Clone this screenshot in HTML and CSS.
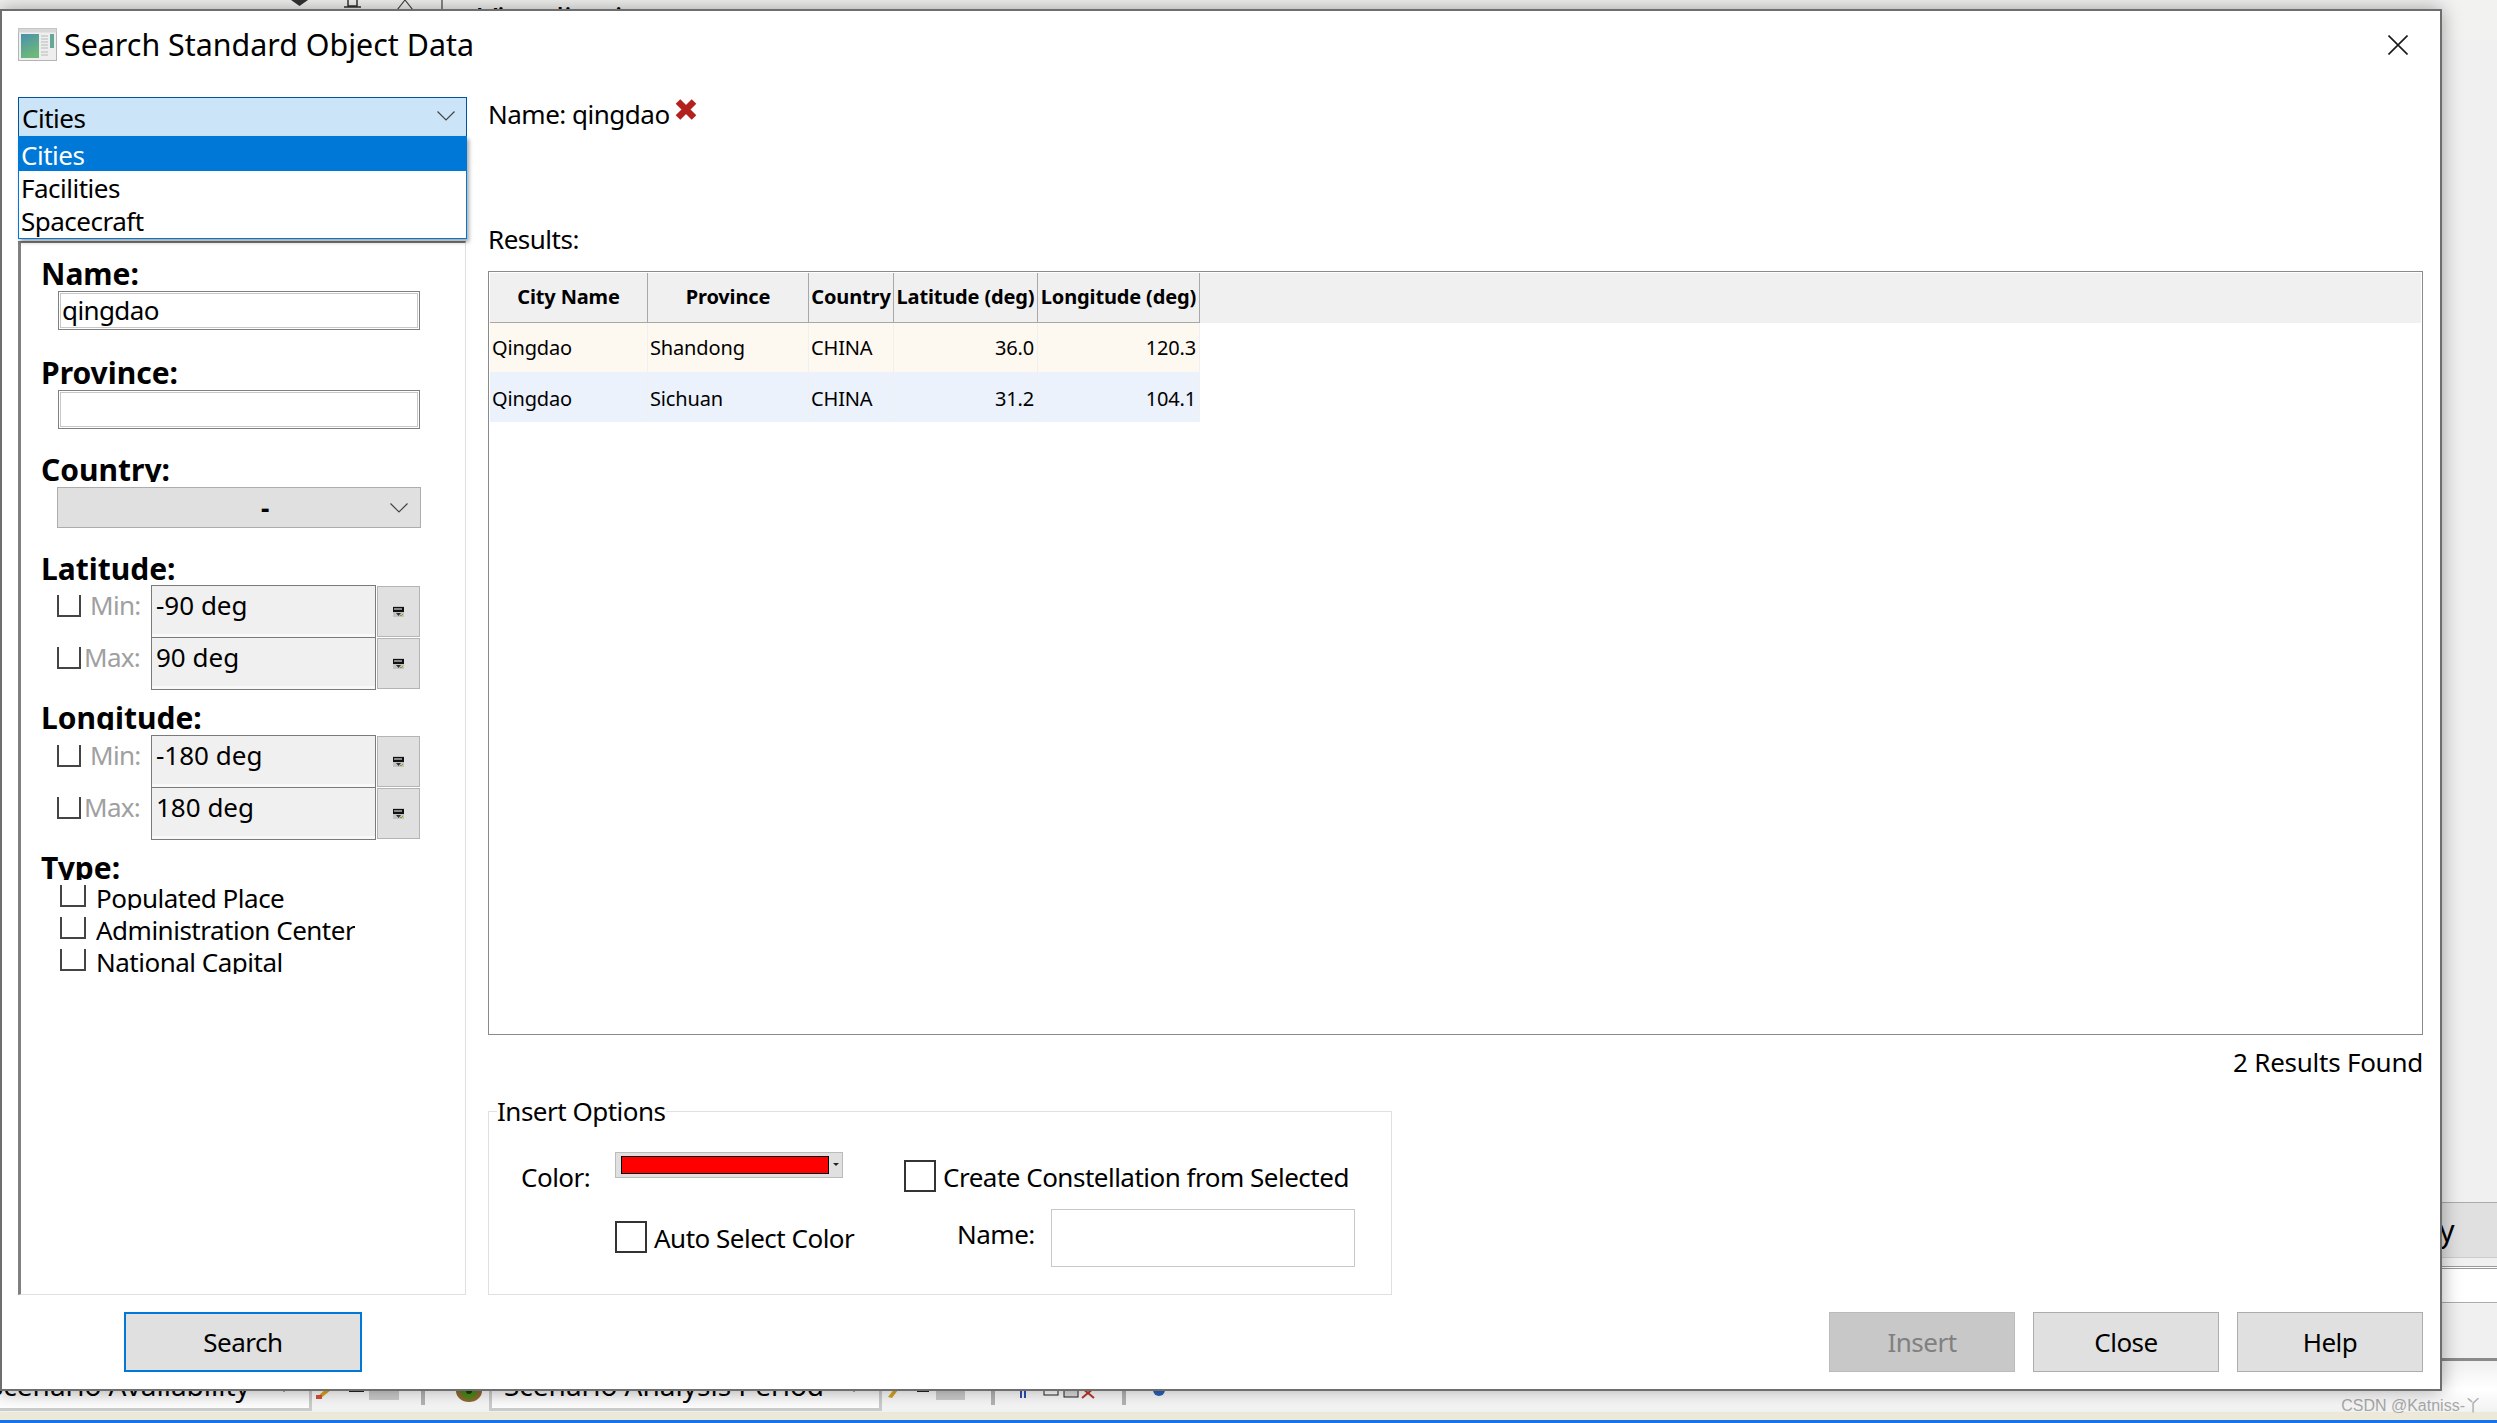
FILE: index.html
```html
<!DOCTYPE html>
<html lang="en">
<head>
    <meta charset="UTF-8">
    <meta name="viewport" content="width=device-width, initial-scale=1.0">
    <title>Search Standard Object Data</title>
    <link rel="stylesheet" href="styles.css">
</head>
<body>
    <svg class="defs" width="0" height="0">
        <symbol id="chevron" viewBox="0 0 18 10">
            <polyline points="0.5,0.5 9,9 17.5,0.5" fill="none" stroke="#444" stroke-width="1.2"/>
        </symbol>
        <symbol id="ruler" viewBox="0 0 11 11">
            <rect width="11" height="11" fill="#c4c4c4"/>
            <rect x="0" y="1" width="11" height="5" fill="#111"/>
            <path d="M2 2v2M4 2v2M6 2v2M8 2v2" stroke="#fff" stroke-width="1"/>
            <polygon points="3,7 8,7 5.5,10" fill="#333"/>
            <path d="M7 9l1 1 2-2" stroke="#9a9a20" stroke-width="1" fill="none"/>
        </symbol>
    </svg>

    <!-- application behind the dialog -->
    <div class="app">
        <div class="app-top">
            <svg class="top-icons" width="130" height="10" viewBox="0 0 130 10">
                <polygon points="0,0 17,0 8.5,6" fill="#333"/>
                <path d="M57 0v6h9v-6M53 7h17" fill="none" stroke="#333" stroke-width="1.5"/>
                <path d="M106 10l8-10 8 10" fill="none" stroke="#444" stroke-width="1.2"/>
            </svg>
            <div class="top-divider"></div>
            <div class="top-tab">Visualization</div>
        </div>
        <div class="app-main">
            <div class="side">
                <div class="side-btn">Apply</div>
                <div class="side-field"></div>
            </div>
        </div>
        <div class="app-toolbar">
            <div class="tool-combo tool-combo-first"><span>Scenario Availability</span><i class="tool-arrow"></i></div>
            <svg class="tool-icons" width="86" height="16" viewBox="0 0 86 16">
                <path d="M2 9l10-9 4 2-10 8z" fill="#d9a520"/>
                <rect x="1" y="7" width="6" height="4" fill="#d8503c"/>
                <rect x="34" y="0" width="15" height="4" fill="#222"/>
                <rect x="54" y="0" width="30" height="12" fill="#ccc"/>
            </svg>
            <div class="tool-sep"></div>
            <svg class="tool-eye" width="28" height="16" viewBox="0 0 28 16">
                <ellipse cx="14" cy="3" rx="13" ry="11" fill="#8c6a30"/>
                <ellipse cx="14" cy="3" rx="8" ry="8" fill="#4c8a18"/>
                <circle cx="14" cy="3" r="3" fill="#1c3a0c"/>
            </svg>
            <div class="tool-combo tool-combo-second"><span>Scenario Analysis Period</span><i class="tool-arrow"></i></div>
            <svg class="tool-icons tool-icons-second" width="78" height="16" viewBox="0 0 78 16">
                <path d="M0 9l7-9 3 2-6 8z" fill="#d9a520"/>
                <rect x="29" y="0" width="12" height="4" fill="#222"/>
                <rect x="48" y="0" width="29" height="12" fill="#ccc"/>
            </svg>
            <div class="tool-sep tool-sep-second"></div>
            <svg class="tool-icons tool-icons-third" width="78" height="12" viewBox="0 0 78 12">
                <path d="M1 2v8M5 2v8" stroke="#2a4fb0" stroke-width="2"/>
                <rect x="24" y="0" width="14" height="7" fill="#fff" stroke="#222"/>
                <rect x="44" y="0" width="14" height="9" fill="#ddd" stroke="#222"/>
                <path d="M62 0l12 10M74 0l-12 10" stroke="#c0342a" stroke-width="2"/>
            </svg>
            <div class="tool-sep tool-sep-third"></div>
            <svg class="tool-icons tool-icons-fourth" width="16" height="10" viewBox="0 0 16 10">
                <circle cx="8" cy="2" r="6" fill="#2a64b8"/>
            </svg>
        </div>
        <div class="app-status"></div>
        <div class="app-taskbar"></div>
    </div>

    <div class="watermark">CSDN @Katniss-丫</div>

    <div class="dialog">
        <div class="titlebar">
            <svg class="title-icon" width="39" height="33" viewBox="0 0 39 33">
                <defs>
                    <linearGradient id="pane" x1="0" y1="0" x2="0.4" y2="1">
                        <stop offset="0" stop-color="#4a90ae"/>
                        <stop offset="1" stop-color="#6db87a"/>
                    </linearGradient>
                </defs>
                <rect x="0.5" y="0.5" width="38" height="32" fill="#eeeeee" stroke="#b4b4b4"/>
                <rect x="0.5" y="0.5" width="38" height="4" fill="#d8d8d8"/>
                <rect x="3" y="6" width="18" height="24" fill="url(#pane)"/>
                <path d="M23 8h7M23 11h7M23 14h7M23 17h7M23 20h7M23 24h7M23 27h7" stroke="#b8b8b8"/>
                <rect x="32" y="6" width="4" height="14" fill="#64a89a"/>
            </svg>
            <div class="title-text">Search Standard Object Data</div>
            <svg class="close-x" width="20" height="20" viewBox="0 0 20 20">
                <path d="M0.5 0.5L19.5 19.5M19.5 0.5L0.5 19.5" stroke="#1a1a1a" stroke-width="1.6"/>
            </svg>
        </div>

        <div class="dialog-body">
            <div class="sidebar">
                <div class="type-combo">
                    <div class="type-value">Cities</div>
                    <svg class="type-chevron" width="18" height="10"><use href="#chevron"/></svg>
                    <div class="type-list">
                        <div class="type-item selected">Cities</div>
                        <div class="type-item">Facilities</div>
                        <div class="type-item">Spacecraft</div>
                    </div>
                </div>

                <div class="panel">
                    <div class="group group-name">
                        <div class="field-label tight">Name:</div>
                        <input class="text-input" type="text" value="qingdao">
                    </div>
                    <div class="group group-province">
                        <div class="field-label tight">Province:</div>
                        <input class="text-input" type="text" value="">
                    </div>
                    <div class="group group-country">
                        <div class="field-label">Country:</div>
                        <div class="country-select">
                            <span class="country-value">-</span>
                            <svg width="18" height="10"><use href="#chevron"/></svg>
                        </div>
                    </div>
                    <div class="group group-latitude">
                        <div class="field-label">Latitude:</div>
                        <div class="range-row">
                            <div class="range-left"><i class="open-check"></i><span class="range-label">Min:</span></div>
                            <div class="range-field">-90 deg</div>
                            <div class="range-btn"><svg width="11" height="11"><use href="#ruler"/></svg></div>
                        </div>
                        <div class="range-row">
                            <div class="range-left"><i class="open-check"></i><span class="range-label max">Max:</span></div>
                            <div class="range-field">90 deg</div>
                            <div class="range-btn"><svg width="11" height="11"><use href="#ruler"/></svg></div>
                        </div>
                    </div>
                    <div class="group group-longitude">
                        <div class="field-label">Longitude:</div>
                        <div class="range-row">
                            <div class="range-left"><i class="open-check"></i><span class="range-label">Min:</span></div>
                            <div class="range-field">-180 deg</div>
                            <div class="range-btn"><svg width="11" height="11"><use href="#ruler"/></svg></div>
                        </div>
                        <div class="range-row">
                            <div class="range-left"><i class="open-check"></i><span class="range-label max">Max:</span></div>
                            <div class="range-field">180 deg</div>
                            <div class="range-btn"><svg width="11" height="11"><use href="#ruler"/></svg></div>
                        </div>
                    </div>
                    <div class="group group-type">
                        <div class="field-label">Type:</div>
                        <div class="type-check"><i class="open-check wide"></i><span>Populated Place</span></div>
                        <div class="type-check"><i class="open-check wide"></i><span>Administration Center</span></div>
                        <div class="type-check"><i class="open-check wide"></i><span>National Capital</span></div>
                    </div>
                </div>
            </div>

            <div class="results">
                <div class="query-line">
                    <span>Name: qingdao</span>
                    <svg class="query-clear" width="24" height="23" viewBox="0 0 24 23">
                        <path d="M4 3.5L20 19.5M20 3.5L4 19.5" stroke="#b3211d" stroke-width="6.5"/>
                    </svg>
                </div>
                <div class="results-label">Results:</div>
                <div class="table-frame">
                    <table class="result-table">
                        <colgroup>
                            <col class="col-city">
                            <col class="col-province">
                            <col class="col-country">
                            <col class="col-lat">
                            <col class="col-lon">
                            <col>
                        </colgroup>
                        <thead>
                            <tr>
                                <th>City Name</th>
                                <th>Province</th>
                                <th>Country</th>
                                <th>Latitude (deg)</th>
                                <th>Longitude (deg)</th>
                                <th class="filler"></th>
                            </tr>
                        </thead>
                        <tbody>
                            <tr class="row-odd">
                                <td>Qingdao</td>
                                <td>Shandong</td>
                                <td>CHINA</td>
                                <td class="num">36.0</td>
                                <td class="num">120.3</td>
                                <td class="filler"></td>
                            </tr>
                            <tr class="row-even">
                                <td>Qingdao</td>
                                <td>Sichuan</td>
                                <td>CHINA</td>
                                <td class="num">31.2</td>
                                <td class="num">104.1</td>
                                <td class="filler"></td>
                            </tr>
                        </tbody>
                    </table>
                </div>
                <div class="results-count">2 Results Found</div>

                <fieldset class="insert-options">
                    <legend>Insert Options</legend>
                    <div class="options-grid">
                        <div class="opt-label">Color:</div>
                        <div class="color-btn">
                            <div class="color-swatch"></div>
                            <i class="color-arrow"></i>
                        </div>
                        <label class="opt-check create"><i class="box"></i><span>Create Constellation from Selected</span></label>
                        <div></div>
                        <label class="opt-check auto"><i class="box"></i><span>Auto Select Color</span></label>
                        <div class="opt-name">
                            <span>Name:</span>
                            <div class="opt-input"></div>
                        </div>
                    </div>
                </fieldset>
            </div>
        </div>

        <div class="footer">
            <button class="btn btn-default">Search</button>
            <div class="footer-right">
                <button class="btn btn-disabled">Insert</button>
                <button class="btn">Close</button>
                <button class="btn">Help</button>
            </div>
        </div>
    </div>
</body>
</html>
```

FILE: styles.css
```css
* {
    box-sizing: border-box;
}
html, body {
    margin: 0;
    height: 100%;
}
body {
    position: relative;
    width: 2497px;
    height: 1423px;
    overflow: hidden;
    font-family: "Noto Sans", sans-serif;
    font-size: 26px;
    letter-spacing: -0.5px;
    color: #000;
    background-color: #f0f0f0;
}
.defs {
    position: absolute;
}

/* app behind the dialog */
.app {
    display: flex;
    flex-direction: column;
    height: 1423px;
}
.app-top {
    display: flex;
    height: 40px;
    padding-left: 291px;
    background-color: #f2f2f0;
}
.top-icons {
    display: block;
}
.top-divider {
    width: 2px;
    height: 10px;
    margin-left: 20px;
    background-color: #888;
}
.top-tab {
    margin-left: 35px;
    font-size: 32px;
    line-height: 40px;
}
.app-main {
    display: flex;
    flex: 1;
    justify-content: flex-end;
    padding-top: 1162px;
    background-color: #f0f0f0;
}
.side {
    width: 200px;
}
.side-btn {
    height: 56px;
    padding-right: 43px;
    border-top: 1px solid #aaa;
    border-bottom: 1px solid #ccc;
    background-color: #e0e0e0;
    font-size: 30px;
    line-height: 56px;
    text-align: right;
}
.side-field {
    height: 37px;
    margin-top: 8px;
    border-top: 3px double #999;
    border-bottom: 1px solid #aaa;
    background-color: #fff;
    box-shadow: 0 1px 0 #f4f3ec;
}
.app-toolbar {
    display: flex;
    align-items: flex-start;
    height: 54px;
    border-top: 3px solid #8a8a8a;
    background: linear-gradient(#f0f0f0, #fff 55%, #f2f2f2);
}
.tool-combo {
    display: flex;
    align-items: center;
    height: 50px;
    border-right: 3px solid #ccc;
    border-bottom: 3px solid #ccc;
    background: linear-gradient(#eee, #fff);
    font-size: 28px;
    letter-spacing: 0;
    line-height: 44px;
    white-space: nowrap;
}
.tool-combo span {
    flex: 1;
}
.tool-combo-first {
    width: 324px;
    margin-left: -12px;
    padding-right: 21px;
}
.tool-combo-second {
    width: 393px;
    margin-left: 6px;
    padding-left: 12px;
    padding-right: 21px;
    border-left: 3px solid #ccc;
}
.tool-arrow {
    width: 0;
    height: 0;
    margin-top: 10px;
    border-top: 5px solid #333;
    border-left: 4px solid transparent;
    border-right: 4px solid transparent;
}
.tool-icons {
    margin-top: 27px;
    margin-left: 3px;
}
.tool-sep {
    width: 4px;
    height: 44px;
    margin-left: 20px;
    background-color: #b4b4b4;
}
.tool-eye {
    margin-top: 27px;
    margin-left: 30px;
}
.tool-icons-second {
    margin-left: 6px;
}
.tool-sep-second {
    margin-left: 25px;
}
.tool-icons-third {
    margin-left: 25px;
}
.tool-sep-third {
    margin-left: 24px;
}
.tool-icons-fourth {
    margin-left: 25px;
}
.app-status {
    height: 8px;
    background-color: #ece9d8;
}
.app-taskbar {
    height: 3px;
    background-color: #1873e8;
}
.watermark {
    position: absolute;
    top: 1396px;
    right: 16px;
    color: #a8a8a8;
    font-family: "Liberation Sans", "Noto Sans CJK SC", sans-serif;
    font-size: 16px;
    letter-spacing: 0;
    line-height: 20px;
}

/* dialog */
.dialog {
    position: absolute;
    top: 9px;
    left: 0;
    display: flex;
    flex-direction: column;
    width: 2442px;
    height: 1382px;
    border: 2px solid #6e6e6e;
    background-color: #fff;
    box-shadow: 0 0 18px rgba(0,0,0,0.35);
}
.titlebar {
    display: flex;
    align-items: center;
    height: 67px;
    padding-left: 16px;
    padding-right: 32px;
}
.title-icon {
    flex: none;
}
.title-text {
    flex: 1;
    margin-left: 7px;
    font-size: 30.4px;
    letter-spacing: 0;
    line-height: 40px;
}
.close-x {
    flex: none;
}
.dialog-body {
    display: grid;
    grid-template-columns: 449px 1935px;
    column-gap: 21px;
    height: 1234px;
    padding: 19px 0 0 16px;
}

/* left column */
.sidebar {
    min-width: 0;
}
.type-combo {
    position: relative;
    display: flex;
    align-items: center;
    height: 40px;
    border: 1px solid #005499;
    background-color: #cce4f7;
}
.type-value {
    flex: 1;
    padding-left: 3px;
    padding-top: 1px;
    line-height: 36px;
}
.type-chevron {
    margin-right: 11px;
    margin-top: -3px;
}
.type-list {
    position: absolute;
    top: 38px;
    left: -1px;
    right: -1px;
    z-index: 1;
    height: 103px;
    border: 1px solid #0078d7;
    border-top: none;
    background-color: #fff;
    box-shadow: 2px 3px 4px rgba(0,0,0,0.35);
}
.type-item {
    height: 33px;
    padding-left: 2px;
    line-height: 35px;
}
.type-item.selected {
    height: 35px;
    padding-top: 2px;
    background-color: #0078d7;
    color: #fff;
}
.panel {
    width: 448px;
    height: 1054px;
    margin-top: 104px;
    padding-top: 18px;
    border-top: 2px solid #7a7a7a;
    border-left: 3px solid #808080;
    border-right: 1px solid #e0e0e0;
    border-bottom: 1px solid #e0e0e0;
}
.group-province {
    margin-top: 30px;
}
.group-country {
    margin-top: 27px;
}
.group-latitude {
    margin-top: 27px;
}
.group-longitude {
    margin-top: 15px;
}
.group-type {
    margin-top: 15px;
}
.field-label {
    height: 26px;
    margin-bottom: 5px;
    padding-left: 20px;
    overflow: hidden;
    font-size: 30px;
    font-weight: bold;
    letter-spacing: 0;
    line-height: 28px;
}
.field-label.tight {
    height: 25px;
    line-height: 26px;
}
.group-latitude .field-label {
    margin-bottom: 4px;
}
.text-input {
    display: block;
    width: 362px;
    height: 39px;
    margin: 0 0 0 37px;
    padding: 0 0 2px 3px;
    border: 1px solid #808080;
    outline: none;
    box-shadow: inset 0 0 0 1px #fff, inset 0 0 0 2px #c8c8c8;
    background-color: #fff;
    font-family: inherit;
    font-size: 26px;
    letter-spacing: -0.6px;
    color: #000;
}
.country-select {
    display: flex;
    align-items: center;
    width: 364px;
    height: 41px;
    margin-left: 36px;
    padding-right: 12px;
    border: 1px solid #adadad;
    background-color: #e0e0e0;
}
.country-value {
    flex: 1;
    padding-left: 82px;
    font-weight: bold;
    text-align: center;
    line-height: 38px;
}
.range-row {
    display: flex;
    height: 52px;
    margin-left: 36px;
}
.range-left {
    display: flex;
    width: 94px;
    padding-top: 10px;
}
.open-check {
    display: block;
    flex: none;
    width: 24px;
    height: 22px;
    border: 2px solid #444;
    border-top: none;
}
.open-check.wide {
    width: 26px;
}
.range-label {
    margin-left: 9px;
    margin-top: -8px;
    color: #a0a0a0;
    font-size: 26px;
    letter-spacing: -0.7px;
    line-height: 36px;
}
.range-label.max {
    margin-left: 3px;
}
.range-field {
    width: 225px;
    height: 53px;
    padding: 1px 0 0 4px;
    border: 1px solid #7a7a7a;
    background-color: #f0f0f0;
    box-shadow: inset 0 -3px 0 #f8f8f8;
    font-size: 26px;
    letter-spacing: 0;
    line-height: 36px;
}
.range-btn {
    display: flex;
    justify-content: center;
    align-items: center;
    width: 43px;
    height: 51px;
    margin-top: 1px;
    margin-left: 1px;
    border: 1px solid #b4b4b4;
    background-color: #e0e0e0;
}
.type-check {
    display: flex;
    height: 32px;
    margin-left: 39px;
    font-size: 26px;
}
.type-check span {
    height: 25px;
    margin-left: 10px;
    overflow: hidden;
    line-height: 26px;
}

/* right column */
.results {
    min-width: 0;
}
.query-line {
    display: flex;
    height: 34px;
    line-height: 34px;
}
.query-clear {
    margin-top: 1px;
    margin-left: 4px;
}
.results-label {
    height: 34px;
    margin-top: 91px;
    line-height: 34px;
}
.table-frame {
    height: 764px;
    margin-top: 15px;
    padding: 1px;
    border: 1px solid #8a8a8a;
}
.result-table {
    width: 100%;
    border-collapse: separate;
    border-spacing: 0;
    table-layout: fixed;
    font-size: 20px;
    letter-spacing: -0.15px;
}
.col-city {
    width: 158px;
}
.col-province {
    width: 161px;
}
.col-country {
    width: 85px;
}
.col-lat {
    width: 144px;
}
.col-lon {
    width: 162px;
}
.result-table th {
    height: 50px;
    padding: 0 0 2px;
    border-right: 1px solid #a8a8a8;
    border-bottom: 1px solid #a8a8a8;
    background-color: #f0f0f0;
    font-weight: bold;
    white-space: nowrap;
}
.result-table th.filler {
    border: none;
}
.result-table td {
    height: 49px;
    padding: 0 2px;
    border-right: 1px solid #f0f0f0;
}
.result-table td.filler {
    border: none;
    background-color: transparent;
}
.result-table td.num {
    padding-right: 3px;
    text-align: right;
}
.row-odd td {
    background-color: #fdf9f0;
}
.row-even td {
    height: 50px;
    padding-top: 2px;
    background-color: #ebf2fc;
}
.results-count {
    height: 34px;
    margin-top: 10px;
    letter-spacing: -0.25px;
    line-height: 34px;
    text-align: right;
}
.insert-options {
    width: 904px;
    height: 201px;
    margin: 15px 0 0;
    padding: 0;
    border: 1px solid #e0e0e0;
}
.insert-options legend {
    margin-left: 8px;
    padding: 0;
    line-height: 34px;
}
.options-grid {
    display: grid;
    grid-template-columns: 94px 289px auto;
    grid-template-rows: 40px 58px;
    row-gap: 17px;
    padding: 24px 0 0 32px;
}
.opt-label {
    margin-top: 8px;
    line-height: 34px;
}
.color-btn {
    display: flex;
    align-items: flex-start;
    width: 228px;
    height: 26px;
    padding: 3px 0 0 5px;
    border: 1px solid #bbb;
    background-color: #e0e0e0;
}
.color-swatch {
    width: 208px;
    height: 18px;
    border: 1px solid #000;
    background-color: #f00;
}
.color-arrow {
    width: 0;
    height: 0;
    margin: 7px 0 0 4px;
    border-top: 3px solid #222;
    border-left: 3px solid transparent;
    border-right: 3px solid transparent;
}
.opt-check {
    display: flex;
    align-items: flex-start;
    line-height: 34px;
    white-space: nowrap;
}
.opt-check .box {
    flex: none;
    width: 32px;
    height: 32px;
    margin-right: 7px;
    border: 2px solid #333;
}
.opt-check.create {
    margin-top: 8px;
}
.opt-check.auto {
    margin-top: 12px;
}
.opt-name {
    display: flex;
    padding-left: 53px;
    line-height: 34px;
}
.opt-name span {
    margin-top: 8px;
}
.opt-input {
    width: 304px;
    height: 58px;
    margin-left: 16px;
    border: 1px solid #c8c8c8;
}

/* buttons */
.footer {
    display: flex;
    justify-content: space-between;
    padding: 0 17px 0 122px;
}
.footer-right {
    display: flex;
    gap: 18px;
}
.btn {
    width: 186px;
    height: 60px;
    padding: 0;
    border: 1px solid #adadad;
    border-radius: 0;
    background-color: #e0e0e0;
    font-family: inherit;
    font-size: 26px;
    letter-spacing: -0.5px;
    color: #000;
}
.btn-default {
    width: 238px;
    border: 2px solid #0078d7;
}
.btn-disabled {
    border-color: #bbb;
    background-color: #c8c8c8;
    color: #808080;
}
```
